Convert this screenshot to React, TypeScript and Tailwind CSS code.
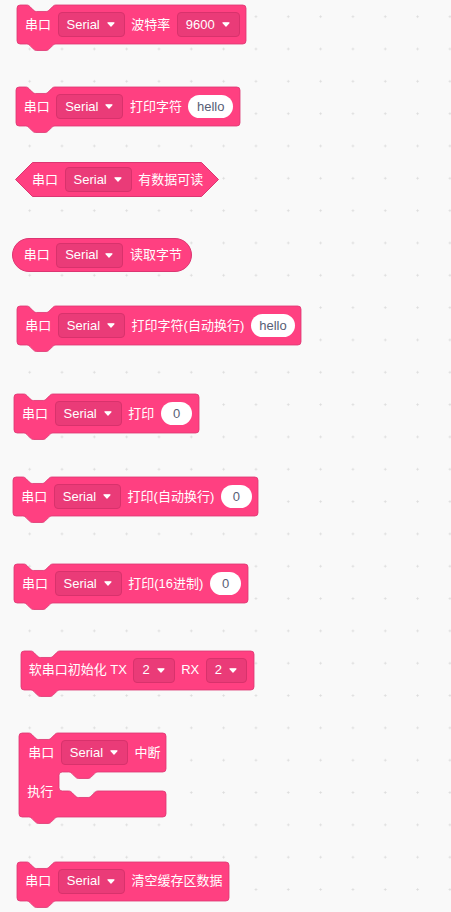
import { useLayoutEffect, useRef, useState, type ReactNode } from "react";

// scratch-blocks units are drawn at this zoom
const S = 0.81;
const FILL = "#ff4081";
const STROKE = "#dc3672";

const NOTCH =
  "c 2,0 3,1 4,2 l 4,4 c 1,1 2,2 4,2 h 12 c 2,0 3,-1 4,-2 l 4,-4 c 1,-1 2,-2 4,-2";
const TAB =
  "c -2,0 -3,1 -4,2 l -4,4 c -1,1 -2,2 -4,2 h -12 c -2,0 -3,-1 -4,-2 l -4,-4 c -1,-1 -2,-2 -4,-2";

function useBox() {
  const ref = useRef<HTMLDivElement>(null);
  const [box, setBox] = useState({ w: 0, h: 0 });
  useLayoutEffect(() => {
    const el = ref.current;
    if (!el) return;
    const update = () => setBox({ w: el.offsetWidth, h: el.offsetHeight });
    update();
    const ro = new ResizeObserver(update);
    ro.observe(el);
    return () => ro.disconnect();
  }, []);
  return [ref, box] as const;
}

function stackPath(w: number, h: number) {
  const W = w / S;
  const H = h / S;
  return `M 0,4 A 4,4 0 0,1 4,0 H 12 ${NOTCH} H ${W - 4} A 4,4 0 0,1 ${W},4 V ${H - 4} A 4,4 0 0,1 ${W - 4},${H} H 48 ${TAB} H 4 A 4,4 0 0,1 0,${H - 4} Z`;
}

function cPath(w: number, h: number) {
  const W = w / S;
  const H = h / S;
  const a1 = 39 / S;
  const a2 = 58 / S;
  const wall = 40 / S;
  return [
    `M 0,4 A 4,4 0 0,1 4,0 H 12 ${NOTCH} H ${W - 4} A 4,4 0 0,1 ${W},4`,
    `V ${a1 - 4} A 4,4 0 0,1 ${W - 4},${a1} H ${wall + 48} ${TAB} H ${wall + 4}`,
    `A 4,4 0 0,0 ${wall},${a1 + 4} V ${a2 - 4} A 4,4 0 0,0 ${wall + 4},${a2}`,
    `H ${wall + 12} ${NOTCH} H ${W - 4} A 4,4 0 0,1 ${W},${a2 + 4}`,
    `V ${H - 4} A 4,4 0 0,1 ${W - 4},${H} H 48 ${TAB} H 4 A 4,4 0 0,1 0,${H - 4} Z`,
  ].join(" ");
}

function Caret() {
  return (
    <svg width="8" height="5" viewBox="0 0 8 5" className="shrink-0">
      <path d="M1 0.8 H7 L4 4.2 Z" fill="#fff" stroke="#fff" strokeWidth="1.2" strokeLinejoin="round" />
    </svg>
  );
}

function Dropdown({ value }: { value: string }) {
  return (
    <div className="flex h-[25px] shrink-0 items-center gap-[7px] rounded-[4px] border border-[#d8326c] bg-[#ea3b78] pl-[8px] pr-[9px] text-white">
      <span className="whitespace-nowrap">{value}</span>
      <Caret />
    </div>
  );
}

function Pill({ value }: { value: string }) {
  return (
    <div className="flex h-[23px] min-w-[31.5px] shrink-0 items-center justify-center rounded-full bg-white px-[8.5px] text-[#575e75]">
      {value}
    </div>
  );
}

function Label({ children }: { children: ReactNode }) {
  return <span className="whitespace-nowrap text-white">{children}</span>;
}

function StackBlock({ children, className }: { children: ReactNode; className: string }) {
  const [ref, box] = useBox();
  return (
    <div ref={ref} className={`relative flex h-[39px] w-fit items-center ${className}`}>
      {box.w > 0 && (
        <svg className="absolute left-0 top-0 overflow-visible" width={box.w} height={box.h + 8}>
          <path d={stackPath(box.w, box.h)} fill={FILL} stroke={STROKE} transform={`scale(${S})`} />
        </svg>
      )}
      <div className="relative flex items-center gap-[6.5px] pl-[8px] pr-[6.5px]">{children}</div>
    </div>
  );
}

function BoolBlock({ children, className }: { children: ReactNode; className: string }) {
  const [ref, box] = useBox();
  const { w, h } = box;
  return (
    <div ref={ref} className={`relative flex h-[34.5px] w-fit items-center ${className}`}>
      {w > 0 && (
        <svg className="absolute left-0 top-0 overflow-visible" width={w} height={h}>
          <path
            d={`M ${h / 2},0.5 H ${w - h / 2} L ${w - 0.5},${h / 2} L ${w - h / 2},${h - 0.5} H ${h / 2} L 0.5,${h / 2} Z`}
            fill={FILL}
            stroke={STROKE}
          />
        </svg>
      )}
      <div className="relative flex items-center gap-[6.5px] pl-[17px] pr-[16px]">{children}</div>
    </div>
  );
}

function ReporterBlock({ children, className }: { children: ReactNode; className: string }) {
  return (
    <div
      className={`flex h-[33.5px] w-fit items-center gap-[6.5px] rounded-full border border-[#dc3672] bg-[#ff4081] pl-[11px] pr-[9px] ${className}`}
    >
      {children}
    </div>
  );
}

function CBlock({ className }: { className: string }) {
  const [ref, box] = useBox();
  return (
    <div ref={ref} className={`relative flex w-fit flex-col ${className}`}>
      {box.w > 0 && (
        <svg className="absolute left-0 top-0 overflow-visible" width={box.w} height={box.h + 8}>
          <path d={cPath(box.w, box.h)} fill={FILL} stroke={STROKE} transform={`scale(${S})`} />
        </svg>
      )}
      <div className="relative flex h-[39px] items-center gap-[6.5px] pl-[9px] pr-[6px]">
        <Label>串口</Label>
        <Dropdown value="Serial" />
        <Label>中断</Label>
      </div>
      <div className="relative h-[44.5px] pl-[8px] pt-[12px] leading-[16px]">
        <Label>执行</Label>
      </div>
    </div>
  );
}

export default function App() {
  return (
    <div className="h-[912px] w-full overflow-hidden bg-[#f9f9f9] bg-[radial-gradient(circle,#dcdcdc_0.9px,transparent_1.2px)] bg-[length:32.33px_32.33px] bg-[position:13.5px_0.5px] font-['Liberation_Sans','Noto_Sans_CJK_SC',sans-serif] text-[13px]">
      <div className="flex flex-col items-start pt-[5px]">
        <StackBlock className="ml-[17px]">
          <Label>串口</Label>
          <Dropdown value="Serial" />
          <Label>波特率</Label>
          <Dropdown value="9600" />
        </StackBlock>

        <StackBlock className="ml-[15.7px] mt-[43px]">
          <Label>串口</Label>
          <Dropdown value="Serial" />
          <Label>打印字符</Label>
          <Pill value="hello" />
        </StackBlock>

        <BoolBlock className="ml-[15px] mt-[36.3px]">
          <Label>串口</Label>
          <Dropdown value="Serial" />
          <Label>有数据可读</Label>
        </BoolBlock>

        <ReporterBlock className="ml-[11.7px] mt-[41.5px]">
          <Label>串口</Label>
          <Dropdown value="Serial" />
          <Label>读取字节</Label>
        </ReporterBlock>

        <StackBlock className="ml-[17.3px] mt-[34.2px]">
          <Label>串口</Label>
          <Dropdown value="Serial" />
          <Label>打印字符(自动换行)</Label>
          <Pill value="hello" />
        </StackBlock>

        <StackBlock className="ml-[14px] mt-[49px]">
          <Label>串口</Label>
          <Dropdown value="Serial" />
          <Label>打印</Label>
          <Pill value="0" />
        </StackBlock>

        <StackBlock className="ml-[13.3px] mt-[44.3px]">
          <Label>串口</Label>
          <Dropdown value="Serial" />
          <Label>打印(自动换行)</Label>
          <Pill value="0" />
        </StackBlock>

        <StackBlock className="ml-[14px] mt-[47.7px]">
          <Label>串口</Label>
          <Dropdown value="Serial" />
          <Label>打印(16进制)</Label>
          <Pill value="0" />
        </StackBlock>

        <StackBlock className="ml-[20.7px] mt-[47.7px]">
          <Label>软串口初始化 TX</Label>
          <Dropdown value="2" />
          <Label>RX</Label>
          <Dropdown value="2" />
        </StackBlock>

        <CBlock className="ml-[19.3px] mt-[43.6px]" />

        <StackBlock className="ml-[17.3px] mt-[44.9px]">
          <Label>串口</Label>
          <Dropdown value="Serial" />
          <Label>清空缓存区数据</Label>
        </StackBlock>
      </div>
    </div>
  );
}
